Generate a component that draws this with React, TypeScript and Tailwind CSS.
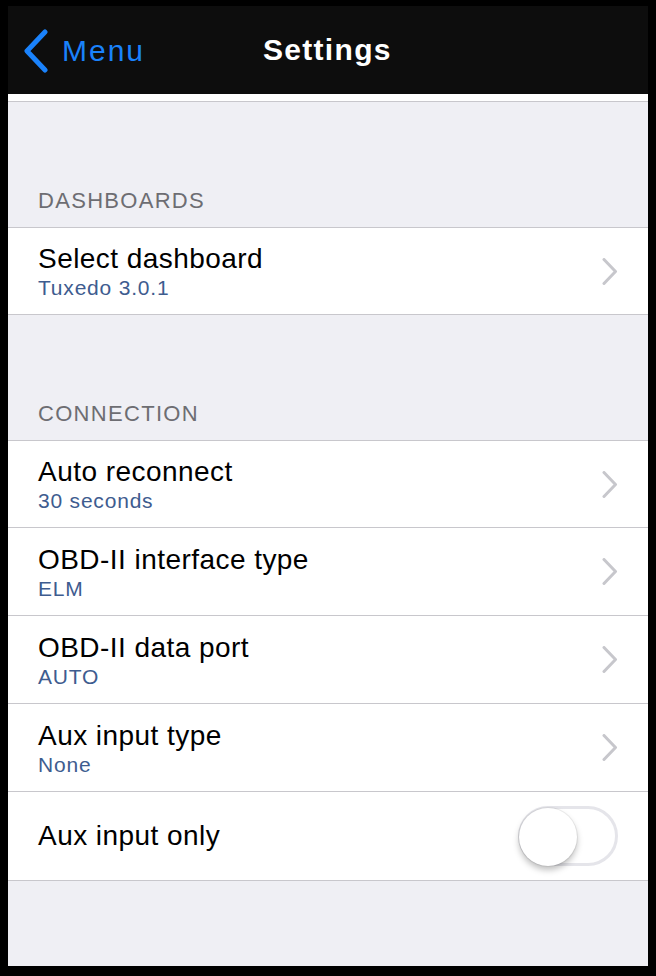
import { useState } from "react";

const font = { fontFamily: '"Liberation Sans", Arial, sans-serif' };

function Chevron() {
  return (
    <svg width="16" height="27" viewBox="0 0 16 27" className="shrink-0">
      <path
        d="M2 1.5 L13.5 13.5 L2 25.5"
        fill="none"
        stroke="#c7c7cc"
        strokeWidth="3"
        strokeLinecap="round"
        strokeLinejoin="round"
      />
    </svg>
  );
}

function SectionHeader({ title }: { title: string }) {
  return (
    <div className="h-[126px] flex items-end pb-[15px] px-[30px] border-b border-[#c8c7cc]">
      <span className="text-[22px] tracking-[1.3px] text-[#6d6d72] leading-none">
        {title}
      </span>
    </div>
  );
}

function Row({
  title,
  value,
  last,
  h = "h-[88px]",
}: {
  title: string;
  value: string;
  last?: boolean;
  h?: string;
}) {
  return (
    <div className={`${h} flex bg-white`}>
      <div
        className={`flex-1 flex items-center justify-between pl-[30px] pr-[30px] ${
          last ? "" : "border-b border-[#c8c7cc]"
        }`}
      >
        <div className="flex flex-col pt-[2px]">
          <span className="text-[28px] leading-[32px] text-black tracking-[0.45px]">
            {title}
          </span>
          <span className="text-[21px] leading-[26px] text-[#3e5c8f] tracking-[0.8px]">
            {value}
          </span>
        </div>
        <Chevron />
      </div>
    </div>
  );
}

function Toggle() {
  const [on, setOn] = useState(false);
  return (
    <button
      onClick={() => setOn(!on)}
      className={`relative w-[100px] h-[60px] rounded-full border-[3px] ${
        on ? "bg-[#4cd964] border-[#4cd964]" : "bg-white border-[#e5e5ea]"
      }`}
    >
      <span
        className={`absolute top-[-1px] ${
          on ? "left-[38px]" : "left-[-2px]"
        } w-[58px] h-[58px] rounded-full bg-white shadow-[0_4px_6px_rgba(0,0,0,0.25),0_0_0_1px_rgba(0,0,0,0.06)]`}
      />
    </button>
  );
}

export default function App() {
  return (
    <div className="w-[656px] h-[976px] bg-black px-[8px] pb-[10px] pt-[6px]" style={font}>
      <div className="h-full flex flex-col bg-[#efeff4] overflow-hidden">
        <div className="h-[88px] bg-[#0d0d0d] relative flex items-center shrink-0">
          <div className="flex items-center pl-[15px] gap-[13px] pt-[2px]">
            <svg width="26" height="44" viewBox="0 0 26 44">
              <path
                d="M22 3 L4 22 L22 41"
                fill="none"
                stroke="#1a82fb"
                strokeWidth="5"
                strokeLinecap="round"
                strokeLinejoin="round"
              />
            </svg>
            <span className="text-[30px] tracking-[2px] text-[#1a82fb] leading-none">
              Menu
            </span>
          </div>
          <span className="absolute left-[255px] top-[29px] text-[30px] font-bold tracking-[1.3px] text-white leading-none">
            Settings
          </span>
        </div>
        <div className="h-[8px] bg-white border-b border-[#c8c7cc] shrink-0" />

        <SectionHeader title="DASHBOARDS" />
        <div className="border-b border-[#c8c7cc]">
          <Row title="Select dashboard" value="Tuxedo 3.0.1" last h="h-[86px]" />
        </div>

        <SectionHeader title="CONNECTION" />
        <div className="border-b border-[#c8c7cc]">
          <Row title="Auto reconnect" value="30 seconds" h="h-[87px]" />
          <Row title="OBD-II interface type" value="ELM" />
          <Row title="OBD-II data port" value="AUTO" />
          <Row title="Aux input type" value="None" />
          <div className="h-[88px] bg-white flex items-center justify-between pl-[30px] pr-[30px]">
            <span className="text-[28px] text-black tracking-[0.45px]">
              Aux input only
            </span>
            <Toggle />
          </div>
        </div>
      </div>
    </div>
  );
}
